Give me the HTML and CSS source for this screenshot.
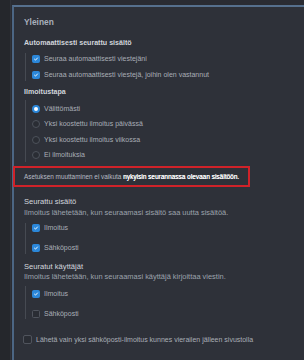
FILE: index.html
```html
<!DOCTYPE html>
<html lang="fi">
<head>
<meta charset="utf-8">
<link rel="stylesheet" href="styles.css">
</head>
<body>
<div class="page">
  <div class="panel">
    <h1 class="title">Yleinen</h1>

    <h2 class="sub s1">Automaattisesti seurattu sisältö</h2>
    <div class="group g1">
      <label class="row"><span class="cb on"><svg viewBox="0 0 8 8"><polyline points="2,4.2 3.4,5.5 6,2.6"/></svg></span><span class="lbl">Seuraa automaattisesti viestejäni</span></label>
      <label class="row"><span class="cb on"><svg viewBox="0 0 8 8"><polyline points="2,4.2 3.4,5.5 6,2.6"/></svg></span><span class="lbl">Seuraa automaattisesti viestejä, joihin olen vastannut</span></label>
    </div>

    <h2 class="sub s2">Ilmoitustapa</h2>
    <div class="group g2">
      <label class="row"><span class="rd on"></span><span class="lbl">Välittömästi</span></label>
      <label class="row"><span class="rd"></span><span class="lbl">Yksi koostettu ilmoitus päivässä</span></label>
      <label class="row"><span class="rd"></span><span class="lbl">Yksi koostettu ilmoitus viikossa</span></label>
      <label class="row"><span class="rd"></span><span class="lbl">Ei ilmoituksia</span></label>
    </div>

    <div class="info">Asetuksen muuttaminen ei vaikuta <strong>nykyisin seurannassa olevaan sisältöön.</strong></div>

    <h3 class="sec s3">Seurattu sisältö</h3>
    <p class="desc d3">Ilmoitus lähetetään, kun seuraamasi sisältö saa uutta sisältöä.</p>
    <div class="group g3">
      <label class="row"><span class="cb on"><svg viewBox="0 0 8 8"><polyline points="2,4.2 3.4,5.5 6,2.6"/></svg></span><span class="lbl">Ilmoitus</span></label>
      <label class="row"><span class="cb on"><svg viewBox="0 0 8 8"><polyline points="2,4.2 3.4,5.5 6,2.6"/></svg></span><span class="lbl">Sähköposti</span></label>
    </div>

    <h3 class="sec s4">Seuratut käyttäjät</h3>
    <p class="desc d4">Ilmoitus lähetetään, kun seuraamasi käyttäjä kirjoittaa viestin.</p>
    <div class="group g4">
      <label class="row"><span class="cb on"><svg viewBox="0 0 8 8"><polyline points="2,4.2 3.4,5.5 6,2.6"/></svg></span><span class="lbl">Ilmoitus</span></label>
      <label class="row"><span class="cb"></span><span class="lbl">Sähköposti</span></label>
    </div>

    <label class="row final"><span class="cb big"></span><span class="lbl">Lähetä vain yksi sähköposti-ilmoitus kunnes vierailen jälleen sivustolla</span></label>
  </div>
</div>
</body>
</html>
```

FILE: styles.css
```css
html, body {
  margin: 0;
  padding: 0;
  background: #25272c;
  height: 360px;
  overflow: hidden;
}

body {
  font-family: "Liberation Sans", Arial, sans-serif;
  font-size: 7px;
  color: #a9aeb7;
}

.page {
  margin-left: 11px;
  padding-top: 5px;
  background: #2a2c33;
  box-shadow: -1px 0 0 #30333a;
  height: 355px;
  overflow: hidden;
}

.panel {
  margin-left: 1px;
  border-top: 2px solid #56708e;
  border-left: 2px solid #4c6684;
  background: #2e3139;
  padding: 10px 0 0 10px;
  height: 400px;
}

.title {
  margin: 0;
  font-size: 8.4px;
  line-height: 11px;
  font-weight: bold;
  color: #a8afbc;
}

.sub {
  margin: 0;
  font-size: 7.1px;
  line-height: 10px;
  font-weight: bold;
  color: #d0d4db;
}

.s1 { margin-top: 10px; }
.s2 { margin-top: 6.5px; }

.group {
  display: flex;
  flex-direction: column;
  margin-left: 1px;
  border-left: 1px solid #464a52;
  padding-left: 6px;
}

.g1 { margin-top: 5px; gap: 3.5px; }
.g1 .row { height: 12px; }

.g2 { margin-top: 3px; padding-top: 3px; padding-bottom: 1px; gap: 3.3px; }
.g2 .row { height: 12px; }

.g3 { margin-top: 4.7px; gap: 9.4px; }
.g3 .row { height: 11px; }

.g4 { margin-top: 3.7px; padding-top: 2.1px; gap: 8.7px; }
.g4 .row { height: 11px; }

.row {
  display: flex;
  align-items: center;
  gap: 4px;
}

.lbl {
  white-space: nowrap;
  line-height: 10px;
}

.cb {
  width: 8px;
  height: 8px;
  box-sizing: border-box;
  border-radius: 1.5px;
  border: 1px solid #50545d;
  background: #2a2d34;
  flex: none;
  display: flex;
}

.cb.on {
  background: #2b87d9;
  border-color: #2b87d9;
}

.cb svg {
  width: 6px;
  height: 6px;
  fill: none;
  stroke: #ffffff;
  stroke-width: 1.2;
  stroke-linecap: round;
  stroke-linejoin: round;
}

.cb.big {
  width: 9px;
  height: 9px;
  border-radius: 2px;
}

.rd {
  width: 8px;
  height: 8px;
  box-sizing: border-box;
  border-radius: 50%;
  border: 1px solid #4d525b;
  background: #2a2d34;
  flex: none;
}

.rd.on {
  background: #ffffff;
  border: 2.5px solid #2b87d9;
}

.info {
  margin: 4px 0 0 -11px;
  width: 237px;
  height: 21px;
  box-sizing: border-box;
  border: 2px solid #d02229;
  padding-left: 9px;
  line-height: 17px;
  font-size: 6.4px;
  color: #b7bcc4;
  white-space: nowrap;
}

.info strong {
  color: #ffffff;
  font-weight: normal;
  text-shadow: 0.3px 0 0 #ffffff;
  letter-spacing: 0.05px;
}

.sec {
  margin: 0;
  font-size: 7.6px;
  font-weight: normal;
  color: #d3d7de;
}

.s3 { margin-top: 9px; line-height: 11px; }
.s4 { margin-top: 7.7px; line-height: 10.5px; }

.desc {
  margin: 0;
  font-size: 7.45px;
  color: #9ca2ac;
  white-space: nowrap;
}

.d3 { line-height: 11px; }
.d4 { line-height: 10.5px; }

.final {
  margin-top: 15.3px;
  height: 11px;
  margin-left: -1px;
}
```
